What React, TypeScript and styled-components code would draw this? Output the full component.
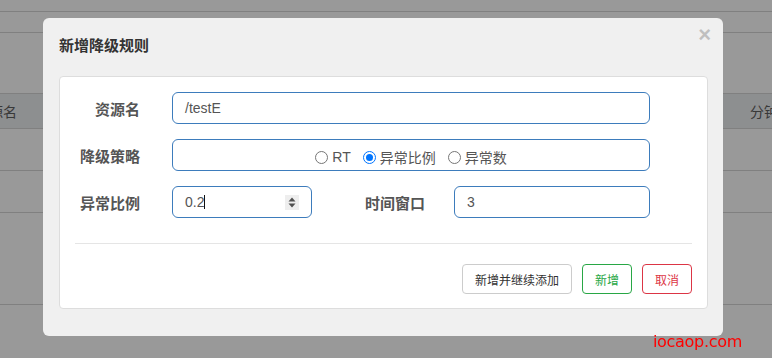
import React from "react";
import styled, { createGlobalStyle } from "styled-components";

const GlobalStyle = createGlobalStyle`
  html, body { margin: 0; padding: 0; }
  body {
    width: 772px;
    height: 358px;
    overflow: hidden;
    background: #fff;
    font-family: "Liberation Sans", "Noto Sans CJK SC", sans-serif;
  }
  * { box-sizing: border-box; }
`;

const Page = styled.div`
  width: 772px;
  height: 358px;
  overflow: hidden;
  background: #fff;
`;

const Band = styled.div<{ $h: number; $bg?: string }>`
  height: ${(p) => p.$h}px;
  border-bottom: 1px solid #d6d6d6;
  background: ${(p) => p.$bg || "#fff"};
`;

const HeaderBand = styled(Band)`
  display: grid;
  grid-template-columns: 775px auto;
  margin-left: -25px;
  align-items: center;
  font-family: "Noto Sans CJK SC", sans-serif;
  font-size: 14px;
  color: #606060;
  white-space: nowrap;
`;

const Backdrop = styled.div`
  position: fixed;
  inset: 0;
  background: rgba(0, 0, 0, 0.4);
  padding: 18px 0 0 43px;
`;

const Modal = styled.div`
  position: relative;
  width: 680px;
  background: #f0f0f0;
  border-radius: 6px;
  padding-bottom: 27px;
`;

const Header = styled.div`
  height: 58px;
  padding: 16px 16px 0;
`;

const Title = styled.div`
  font-family: "Noto Sans CJK SC", sans-serif;
  font-size: 15px;
  font-weight: 700;
  line-height: 22px;
  color: #333;
`;

const Close = styled.span`
  position: absolute;
  top: 6px;
  right: 12px;
  font-family: "Liberation Sans", sans-serif;
  font-size: 22px;
  font-weight: 700;
  line-height: 1;
  color: #000;
  opacity: 0.2;
`;

const Panel = styled.div`
  margin: 0 15px 0 16px;
  background: #fff;
  border: 1px solid #ddd;
  border-radius: 4px;
  padding: 15px 15px 14px;
`;

const Form = styled.div`
  display: flex;
  flex-direction: column;
  gap: 15px;
  padding-right: 42px;
`;

const Row = styled.div`
  display: flex;
  align-items: center;
  height: 32px;
`;

const Label = styled.div<{ $w: number; $gap: number }>`
  width: ${(p) => p.$w}px;
  margin-right: ${(p) => p.$gap}px;
  text-align: right;
  font-family: "Noto Sans CJK SC", sans-serif;
  font-size: 15px;
  font-weight: 700;
  color: #555;
  white-space: nowrap;
`;

const Field = styled.div<{ $w?: number; $center?: boolean }>`
  display: flex;
  align-items: center;
  justify-content: ${(p) => (p.$center ? "center" : "flex-start")};
  height: 32px;
  ${(p) => (p.$w ? `width: ${p.$w}px;` : "flex: 1;")}
  border: 1px solid #3d7cbc;
  border-radius: 6px;
  padding: 0 12px;
  font-family: "Liberation Sans", "Noto Sans CJK SC", sans-serif;
  font-size: 14px;
  color: #555;
  background: #fff;
`;

const Caret = styled.span`
  display: inline-block;
  width: 1px;
  height: 14px;
  background: #111;
  margin-left: 0px;
`;

const Spinner = styled.span`
  margin-left: auto;
  width: 14px;
  height: 15px;
  background: #eee;
  display: flex;
  align-items: center;
  justify-content: center;
`;

const RadioGroup = styled.div`
  display: flex;
  align-items: center;
  gap: 12px;
  margin-top: 4px;
`;

const RadioItem = styled.label`
  display: flex;
  align-items: center;
  gap: 4px;
  font-size: 14px;
  color: #555;
`;

const RadioCircle = styled.span<{ $on?: boolean }>`
  width: 13px;
  height: 13px;
  border-radius: 50%;
  border: ${(p) => (p.$on ? "1px solid #0075ff" : "1px solid #767676")};
  background: #fff;
  display: flex;
  align-items: center;
  justify-content: center;
  &::after {
    content: "";
    display: ${(p) => (p.$on ? "block" : "none")};
    width: 7px;
    height: 7px;
    border-radius: 50%;
    background: #0075ff;
  }
`;

const Divider = styled.div`
  height: 1px;
  background: #e5e5e5;
  margin-top: 25px;
`;

const Footer = styled.div`
  display: flex;
  justify-content: flex-end;
  gap: 10px;
  margin-top: 20px;
`;

const Button = styled.button<{ $tone?: "default" | "success" | "danger" }>`
  height: 30px;
  padding: 0 12px;
  background: #fff;
  border-radius: 4px;
  font-family: "Noto Sans CJK SC", sans-serif;
  font-size: 12px;
  border: 1px solid
    ${(p) =>
      p.$tone === "success" ? "#28a745" : p.$tone === "danger" ? "#dc3545" : "#ccc"};
  color: ${(p) =>
    p.$tone === "success" ? "#28a745" : p.$tone === "danger" ? "#dc3545" : "#333"};
`;

const Watermark = styled.div`
  position: fixed;
  top: 332px;
  right: 30px;
  font-family: "DejaVu Sans", sans-serif;
  font-size: 16px;
  line-height: 20px;
  letter-spacing: -0.3px;
  color: #ff0000;
`;

function Radio({ on, label }: { on?: boolean; label: string }) {
  return (
    <RadioItem>
      <RadioCircle $on={on} />
      {label}
    </RadioItem>
  );
}

export default function App() {
  return (
    <>
      <GlobalStyle />
      <Page>
        <Band $h={12} />
        <Band $h={21} />
        <Band $h={61} />
        <HeaderBand $h={35} $bg="#eceef1">
          <span>资源名</span>
          <span>分钟QPS</span>
        </HeaderBand>
        <Band $h={42} />
        <Band $h={42} />
        <Band $h={92} />
      </Page>
      <Backdrop>
        <Modal>
          <Header>
            <Title>新增降级规则</Title>
          </Header>
          <Close>×</Close>
          <Panel>
            <Form>
              <Row>
                <Label $w={65} $gap={32}>资源名</Label>
                <Field>/testE</Field>
              </Row>
              <Row>
                <Label $w={65} $gap={32}>降级策略</Label>
                <Field $center>
                  <RadioGroup>
                    <Radio label="RT" />
                    <Radio on label="异常比例" />
                    <Radio label="异常数" />
                  </RadioGroup>
                </Field>
              </Row>
              <Row>
                <Label $w={65} $gap={32}>异常比例</Label>
                <Field $w={140}>
                  0.2
                  <Caret />
                  <Spinner>
                    <svg width="8" height="11" viewBox="0 0 8 11">
                      <path d="M4 0.5 L7.5 4.5 L0.5 4.5 Z" fill="#505050" />
                      <path d="M4 10.5 L7.5 6.5 L0.5 6.5 Z" fill="#505050" />
                    </svg>
                  </Spinner>
                </Field>
                <Label $w={113} $gap={29}>时间窗口</Label>
                <Field>3</Field>
              </Row>
            </Form>
            <Divider />
            <Footer>
              <Button>新增并继续添加</Button>
              <Button $tone="success">新增</Button>
              <Button $tone="danger">取消</Button>
            </Footer>
          </Panel>
        </Modal>
      </Backdrop>
      <Watermark>iocaop.com</Watermark>
    </>
  );
}
